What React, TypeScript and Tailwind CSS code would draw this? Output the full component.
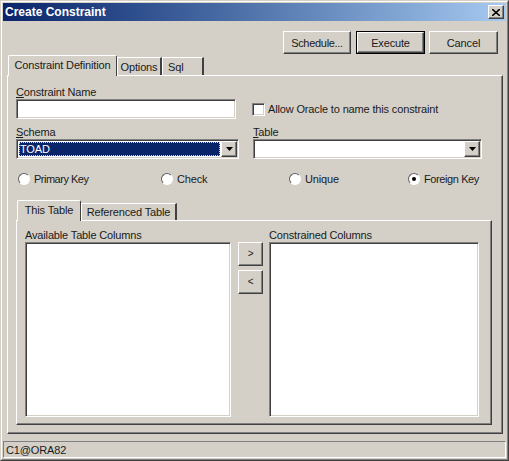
import React from "react";

const raised = "border border-t-white border-l-white border-r-[#404040] border-b-[#404040] shadow-[inset_-1px_-1px_0_#808080]";
const sunken = "border border-t-[#808080] border-l-[#808080] border-r-white border-b-white shadow-[inset_1px_1px_0_#404040,inset_-1px_-1px_0_#d4d0c8]";

function Btn({ children, className = "" }: { children: React.ReactNode; className?: string }) {
  return <div className={`flex items-center justify-center bg-[#d4d0c8] ${raised} ${className}`}>{children}</div>;
}

function Arrow() {
  return (
    <div className={`flex h-[16px] w-[16px] shrink-0 items-center justify-center bg-[#d4d0c8] ${raised}`}>
      <svg width="7" height="4" viewBox="0 0 7 4"><path d="M0 0h7L3.5 4z" fill="#000" /></svg>
    </div>
  );
}

function Radio({ label, checked, className = "" }: { label: string; checked?: boolean; className?: string }) {
  return (
    <div className={`flex items-center gap-[4px] ${className}`}>
      <div className="flex h-[12px] w-[12px] items-center justify-center rounded-full border border-t-[#606060] border-l-[#606060] border-r-white border-b-white bg-white">
        {checked && <div className="h-[4px] w-[4px] rounded-full bg-black" />}
      </div>
      <span>{label}</span>
    </div>
  );
}

export default function App() {
  return (
    <div className="h-[461px] w-[509px] border border-t-[#d4d0c8] border-l-[#d4d0c8] border-r-[#404040] border-b-[#404040] bg-[#d4d0c8] text-[11px] leading-[14px] tracking-[-0.15px] whitespace-nowrap text-[#1a1a1a] [font-family:'Liberation_Sans',Arial,sans-serif]">
      <div className="h-full border border-t-white border-l-white border-r-[#808080] border-b-[#808080] p-[1px]">
        <div className="flex h-full flex-col">
          {/* Title bar */}
          <div className="flex h-[18px] shrink-0 items-center justify-between bg-gradient-to-r from-[#0a246a] to-[#a6caf0] pr-[2px] pl-[2px]">
            <span className="text-[12px] font-bold tracking-normal text-white">Create Constraint</span>
            <Btn className="h-[14px] w-[16px]">
              <svg width="8" height="7" viewBox="0 0 8 7"><path d="M0 0l8 7M8 0L0 7" stroke="#000" strokeWidth="1.6" /></svg>
            </Btn>
          </div>

          <div className="flex min-h-0 flex-1 flex-col">
            {/* Buttons */}
            <div className="flex justify-end pt-[10px] pr-[8px]">
              <Btn className="h-[23px] w-[68px] tracking-[-0.3px]">Schedule...</Btn>
              <div className="mr-[4px] ml-[5px] border border-black">
                <Btn className="h-[21px] w-[67px]">Execute</Btn>
              </div>
              <Btn className="h-[23px] w-[69px]">Cancel</Btn>
            </div>

            {/* Outer tabs */}
            <div className="relative z-10 mt-[1px] flex h-[21px] items-start pl-[5px]">
              <div className="flex h-[21px] w-[109px] items-start justify-center rounded-t-[2px] border-t border-l border-r border-t-white border-l-white border-r-[#404040] bg-[#d4d0c8] pt-[2px]">Constraint Definition</div>
              <div className="mt-[2px] flex h-[18px] w-[45px] items-start justify-center border-t border-l border-r-2 border-t-white border-l-white border-r-[#404040] pt-[2px]">Options</div>
              <div className="mt-[2px] flex h-[18px] w-[42px] items-start border-t border-l border-r-2 border-t-white border-l-white border-r-[#404040] pt-[2px] pl-[5px]">Sql</div>
            </div>

            <div className={`mr-[3px] ml-[4px] -mt-[1px] flex flex-1 flex-col pr-[10px] pl-[8px] pt-[9px] ${raised}`}>
              {/* Row 1 */}
              <div><span className="underline">C</span>onstraint Name</div>
              <div className="flex items-center">
                <div className={`h-[20px] w-[220px] bg-white ${sunken}`} />
                <div className={`ml-[16px] h-[13px] w-[13px] bg-white ${sunken}`} />
                <span className="ml-[3px]">Allow Oracle to name this constraint</span>
              </div>

              {/* Row 2 */}
              <div className="mt-[6px] flex">
                <div className="w-[237px]"><span className="underline">S</span>chema</div>
                <div><span className="underline">T</span>able</div>
              </div>
              <div className="flex">
                <div className={`flex h-[20px] w-[223px] items-center justify-between bg-white p-[1px] ${sunken}`}>
                  <div className="mx-[1px] flex h-[14px] flex-1 items-center border border-dotted border-[#d4d0c8] bg-[#0a246a] text-white">TOAD</div>
                  <Arrow />
                </div>
                <div className={`ml-[14px] flex h-[20px] w-[229px] items-center justify-end bg-white p-[1px] ${sunken}`}>
                  <Arrow />
                </div>
              </div>

              {/* Radios */}
              <div className="mt-[13px] flex pl-[2px]">
                <Radio label="Primary Key" className="w-[143px] tracking-[-0.5px]" />
                <Radio label="Check" className="w-[128px]" />
                <Radio label="Unique" className="w-[119px]" />
                <Radio label="Foreign Key" checked className="tracking-[-0.4px]" />
              </div>

              {/* Inner tabs */}
              <div className="relative z-10 mt-[14px] flex h-[21px] items-start pl-[1px]">
                <div className="flex h-[21px] w-[64px] items-start justify-center rounded-t-[2px] border-t border-l border-r border-t-white border-l-white border-r-[#404040] bg-[#d4d0c8] pt-[2px]">This Table</div>
                <div className="mt-[3px] flex h-[17px] w-[96px] items-start justify-center border-t border-l border-r-2 border-t-white border-l-white border-r-[#404040] pt-[1px]">Referenced Table</div>
              </div>
              <div className={`-mt-[1px] mb-[8px] flex flex-1 px-[8px] pt-[7px] ${raised}`}>
                <div className="flex h-[189px] w-[206px] flex-col">
                  <div>Available Table Columns</div>
                  <div className={`flex-1 bg-white ${sunken}`} />
                </div>
                <div className="ml-[7px] flex w-[25px] flex-col gap-[4px] pt-[14px] text-[10px]">
                  <Btn className="h-[24px]">&gt;</Btn>
                  <Btn className="h-[24px]">&lt;</Btn>
                </div>
                <div className="ml-[6px] flex h-[189px] w-[210px] flex-col">
                  <div>Constrained Columns</div>
                  <div className={`flex-1 bg-white ${sunken}`} />
                </div>
              </div>
            </div>

            {/* Status bar */}
            <div className="mt-[7px] flex h-[17px] shrink-0 items-center border border-t-[#808080] border-l-[#808080] border-r-white border-b-white pl-[2px]">C1@ORA82</div>
          </div>
        </div>
      </div>
    </div>
  );
}
